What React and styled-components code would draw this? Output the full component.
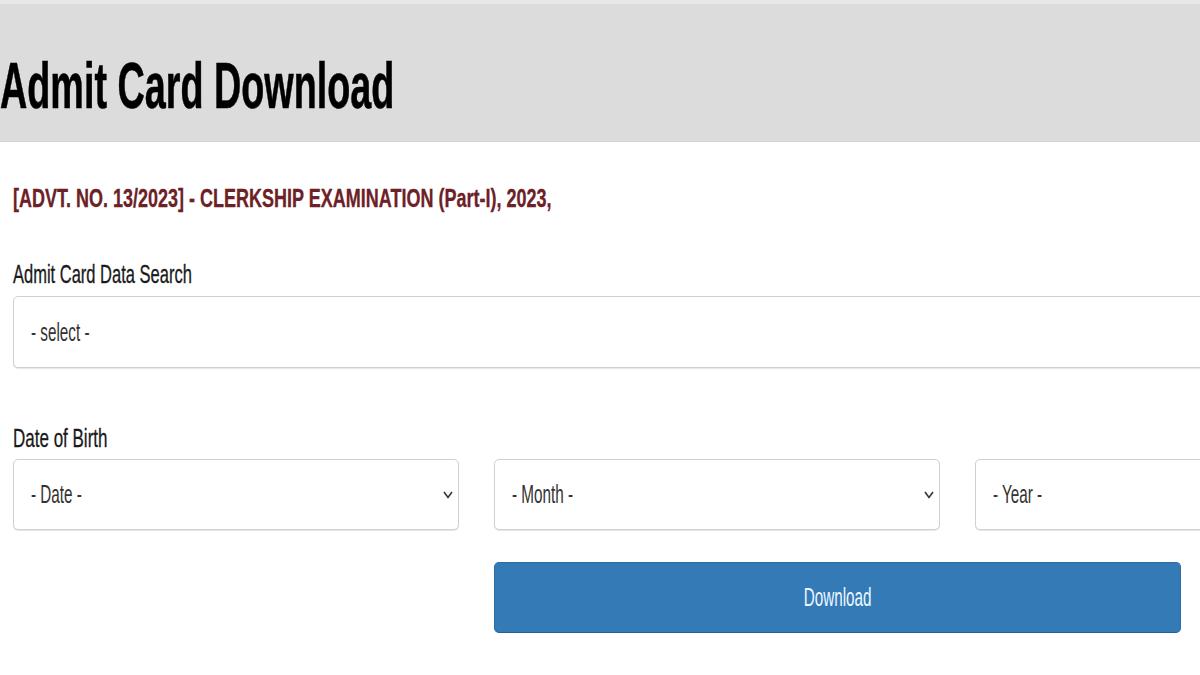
import React from 'react';
import styled, { createGlobalStyle } from 'styled-components';

const GlobalStyle = createGlobalStyle`
  html, body {
    margin: 0;
    padding: 0;
    background: #fff;
    overflow-x: hidden;
  }
  body {
    font-family: "Liberation Sans", Arial, sans-serif;
  }
`;

const Page = styled.div`
  width: 1200px;
  overflow: hidden;
`;

const Header = styled.header`
  box-sizing: border-box;
  height: 142px;
  padding-top: 50px;
  background: #dcdcdc;
  border-top: 4px solid #e8e8e8;
  border-bottom: 1px solid #d2d2d2;
`;

// the screenshot is squeezed sideways, so every text run is narrowed
const Squeeze = styled.span`
  display: inline-block;
  white-space: nowrap;
  transform: scaleX(${p => p.$sx});
  transform-origin: ${p => (p.$center ? 'center' : 'left')} center;
`;

const Title = styled.h1`
  margin: 0;
  font-size: 64px;
  line-height: 64px;
  font-weight: bold;
  color: #000;
  -webkit-text-stroke: 0.6px #000;
`;

const Main = styled.main`
  padding: 0 13px;
`;

const Advt = styled.h3`
  margin: 44px 0 0;
  font-size: 25px;
  line-height: 25px;
  font-weight: bold;
  color: #6c2127;
  -webkit-text-stroke: 0.3px #6c2127;
`;

const Label = styled.label`
  display: block;
  margin-top: ${p => p.$top}px;
  font-size: 25px;
  line-height: 25px;
  color: #1a1a1a;
  -webkit-text-stroke: 0.3px #1a1a1a;
`;

const Grid = styled.div`
  display: grid;
  grid-template-columns: 446px 446px 446px;
  column-gap: 35px;
  margin-top: ${p => p.$top}px;
`;

const SelectBox = styled.div`
  box-sizing: border-box;
  grid-column: ${p => p.$span || 'auto'};
  height: ${p => p.$h}px;
  display: flex;
  align-items: center;
  justify-content: space-between;
  padding: 0 5px 0 17px;
  background: #fff;
  border: 1px solid #d0d0d0;
  border-radius: 5px;
  box-shadow: 0 1px 1px rgba(0, 0, 0, 0.1);
  font-size: 25px;
  color: #333;
`;

const Chevron = styled.svg`
  flex: none;
  width: 10px;
  height: 9px;
`;

const Button = styled.button`
  box-sizing: border-box;
  grid-column: 2 / 4;
  width: 687px;
  height: 71px;
  padding: 0;
  background: #337ab7;
  border: 1px solid #2e6da4;
  border-bottom-color: #285f90;
  border-radius: 5px;
  color: #eef7ff;
  font-family: "Liberation Sans", Arial, sans-serif;
  font-size: 25px;
  cursor: pointer;
`;

function Arrow() {
  return (
    <Chevron viewBox="0 0 10 9">
      <polyline points="1,2 5,7.5 9,2" fill="none" stroke="#333" strokeWidth="1.6" />
    </Chevron>
  );
}

function Select({ text, span, arrow = true }) {
  return (
    <SelectBox $span={span} $h={span ? 72 : 71}>
      <Squeeze $sx={0.61}>{text}</Squeeze>
      {arrow && <Arrow />}
    </SelectBox>
  );
}

export default function App() {
  return (
    <Page>
      <GlobalStyle />
      <Header>
        <Title>
          <Squeeze $sx={0.59}>Admit Card Download</Squeeze>
        </Title>
      </Header>
      <Main>
        <Advt>
          <Squeeze $sx={0.72}>[ADVT. NO. 13/2023] - CLERKSHIP EXAMINATION (Part-I), 2023,</Squeeze>
        </Advt>

        <Label $top={51}>
          <Squeeze $sx={0.66}>Admit Card Data Search</Squeeze>
        </Label>
        <Grid $top={9}>
          <Select text="- select -" span="1 / 4" arrow={false} />
        </Grid>

        <Label $top={58}>
          <Squeeze $sx={0.68}>Date of Birth</Squeeze>
        </Label>
        <Grid $top={8}>
          <Select text="- Date -" />
          <Select text="- Month -" />
          <Select text="- Year -" />
        </Grid>

        <Grid $top={32}>
          <Button>
            <Squeeze $sx={0.61} $center>Download</Squeeze>
          </Button>
        </Grid>
      </Main>
    </Page>
  );
}
